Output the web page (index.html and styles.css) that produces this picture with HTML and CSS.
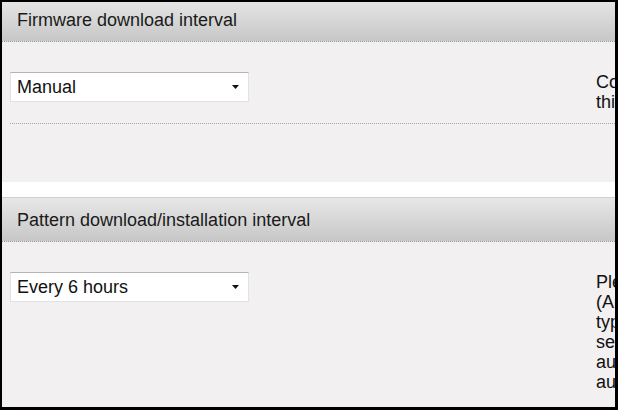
FILE: index.html
```html
<!DOCTYPE html>
<html lang="en">
<head>
    <meta charset="UTF-8">
    <title>Update Settings</title>
    <link rel="stylesheet" href="styles.css">
</head>
<body>
    <div class="frame">
        <div class="page">
            <section class="panel">
                <h2 class="panel-title">Firmware download interval</h2>
                <div class="panel-body">
                    <div class="setting">
                        <div class="picker">
                            <span>Manual</span>
                            <svg width="7" height="4" viewBox="0 0 7 4"><path d="M0 0h7L3.5 4z" fill="#111"/></svg>
                        </div>
                        <div class="hint">
                            <p>Configure the interval at which new firmware is downloaded.<br>this setting does not install the firmware automatically.</p>
                        </div>
                    </div>
                </div>
            </section>
            <section class="panel">
                <h2 class="panel-title">Pattern download/installation interval</h2>
                <div class="panel-body">
                    <div class="setting">
                        <div class="picker">
                            <span>Every 6 hours</span>
                            <svg width="7" height="4" viewBox="0 0 7 4"><path d="M0 0h7L3.5 4z" fill="#111"/></svg>
                        </div>
                        <div class="hint">
                            <p>Please specify the interval for downloading patterns<br>(Anti-Virus, Anti-Spyware and other pattern<br>types). Downloaded patterns are verified and<br>sequentially installed on the appliance. The<br>automatic update runs in the background and<br>automatically applies the latest patterns.</p>
                            <p>Manual updates remain available at any time.</p>
                        </div>
                    </div>
                </div>
            </section>
        </div>
    </div>
</body>
</html>
```
FILE: styles.css
```css
* {
    box-sizing: border-box;
}
html, body {
    margin: 0;
    background-color: #000;
}
body {
    font-family: "Liberation Sans", Arial, sans-serif;
    font-size: 18px;
    color: #111;
}
.frame {
    margin: 2px 3px 0 2px;
    height: 405px;
    overflow: hidden;
    background-color: #fff;
}
.page {
    margin-top: -5px;
}
.panel {
    border-top: 1px solid #cfcfcf;
    margin-bottom: 15px;
}
.panel-title {
    margin: 0;
    padding: 12px 15px 0;
    height: 44px;
    font-size: 18px;
    font-weight: normal;
    line-height: 20px;
    color: #1a1a1a;
    background: linear-gradient(#e7e7e7, #c7c7c7);
    border-bottom: 1px dotted #9a9a9a;
}
.panel-body {
    background-color: #f2f0f0;
    padding: 30px 0 58px 8px;
}
.setting {
    display: grid;
    grid-template-columns: 586px 460px;
    align-items: start;
    padding-bottom: 11px;
    border-bottom: 1px dotted #a8a8a8;
}
.picker {
    width: 239px;
    height: 30px;
    display: flex;
    align-items: center;
    justify-content: space-between;
    padding: 0 9px 0 6px;
    background-color: #fff;
    border: 1px solid #e2e2e2;
    border-top-color: #b4b4b4;
}
.hint {
    line-height: 20px;
    white-space: nowrap;
}
.hint p {
    margin: 0;
}
.hint p + p {
    margin-top: 18px;
}
```
